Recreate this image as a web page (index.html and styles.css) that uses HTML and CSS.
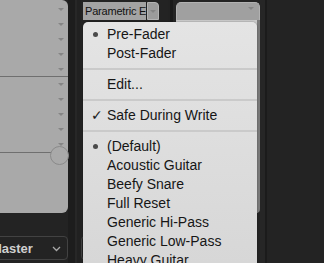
FILE: index.html
```html
<!DOCTYPE html>
<html lang="en">

<head>
    <meta charset="UTF-8">
    <title>Mixer insert menu</title>
    <link rel="stylesheet" href="styles.css">
</head>

<body>
    <div class="mixer">
        <div class="strip strip-master">
            <div class="panel">
                <ul class="slots">
                    <li><i class="arrow"></i></li>
                    <li><i class="arrow"></i></li>
                    <li><i class="arrow"></i></li>
                    <li><i class="arrow"></i></li>
                    <li><i class="arrow"></i></li>
                </ul>
                <ul class="slots">
                    <li><i class="arrow"></i></li>
                    <li><i class="arrow"></i></li>
                    <li><i class="arrow"></i></li>
                    <li><i class="arrow"></i></li>
                    <li><i class="arrow"></i></li>
                </ul>
                <span class="knob"></span>
            </div>
            <div class="output output-master">
                <span>Master</span>
                <svg width="9" height="6" viewBox="0 0 9 6">
                    <polyline points="1,1 4.5,4.5 8,1" fill="none" stroke="#a8a8a8" stroke-width="1.3" />
                </svg>
            </div>
        </div>
        <div class="gutter gutter-a"></div>
        <div class="strip strip-eq">
            <div class="insert">
                <span class="insert-name">Parametric E</span>
                <span class="insert-btn"><i class="arrow"></i></span>
            </div>
            <div class="output"></div>
        </div>
        <div class="gutter gutter-b"></div>
        <div class="strip strip-send">
            <div class="insert insert-empty"><i class="arrow"></i></div>
            <div class="panel panel-light"></div>
        </div>
        <div class="gutter gutter-c"></div>
    </div>

    <!-- popup menu of the insert slot -->
    <ul class="menu">
        <li class="marked">Pre-Fader</li>
        <li>Post-Fader</li>
        <li class="sep"></li>
        <li>Edit...</li>
        <li class="sep"></li>
        <li class="checked">Safe During Write</li>
        <li class="sep"></li>
        <li class="marked">(Default)</li>
        <li>Acoustic Guitar</li>
        <li>Beefy Snare</li>
        <li>Full Reset</li>
        <li>Generic Hi-Pass</li>
        <li>Generic Low-Pass</li>
        <li>Heavy Guitar</li>
    </ul>
</body>

</html>
```

FILE: styles.css
```css
body {
    margin: 0;
    padding: 0;
    background: #232323;
    font-family: 'Liberation Sans', Arial, sans-serif;
    overflow: hidden;
}

ul {
    margin: 0;
    padding: 0;
    list-style: none;
}

.mixer {
    display: flex;
    height: 263px;
}

.strip {
    display: flex;
    flex-direction: column;
    flex-shrink: 0;
}

.strip-master {
    width: 68px;
}

.strip-eq {
    width: 87px;
}

.strip-send {
    width: 84px;
}

.gutter {
    flex-shrink: 0;
}

.gutter-a {
    width: 13px;
    background: linear-gradient(to right, #1d1d1d 0 7px, #272727 7px 9px, #212121 9px);
}

.gutter-b {
    width: 8px;
    background: linear-gradient(to right, #222 0 2px, #1a1a1a 2px 5px, #242424 5px);
}

.gutter-c {
    flex: 1;
    background: linear-gradient(to right, #262626 0 5px, #1b1b1b 5px 7px, #232323 7px);
}

.arrow {
    display: block;
    width: 0;
    height: 0;
    border-left: 3px solid transparent;
    border-right: 3px solid transparent;
    border-top: 3px solid #858585;
}

/* left strip */
.panel {
    position: relative;
    height: 213px;
    background: #a9a9a9;
    border-radius: 0 6px 6px 0;
    box-sizing: border-box;
    padding-top: 2px;
}

.slots {
    border-bottom: 1px solid #6f6f6f;
}

.slots li {
    display: flex;
    justify-content: flex-end;
    align-items: center;
    height: 15px;
    padding-right: 4px;
}

.slots:first-child li:last-child {
    height: 14px;
}

.knob {
    position: absolute;
    left: 50px;
    top: 146px;
    width: 17px;
    height: 17px;
    border: 1px solid #8a8a8a;
    border-radius: 50%;
    background: #a9a9a9;
}

.output {
    margin-top: 25px;
    height: 22px;
    border: 1px solid #424242;
    border-radius: 4px;
}

.output-master {
    display: flex;
    align-items: center;
    justify-content: space-between;
    margin-top: 23px;
    margin-left: -14px;
    padding: 0 6px 0 4px;
    color: #cfcfcf;
    font-size: 13px;
    font-weight: bold;
}

.output-master svg {
    margin-top: 1px;
}

/* middle strip */
.insert {
    display: flex;
    height: 18px;
    margin: 2px 0 0 2px;
}

.insert-name {
    width: 63px;
    background: #a3a3a3;
    color: #111;
    font-size: 11px;
    letter-spacing: -0.2px;
    line-height: 18px;
    padding-left: 2px;
    box-sizing: border-box;
    white-space: nowrap;
}

.insert-btn {
    display: flex;
    align-items: center;
    justify-content: center;
    width: 12px;
    margin-left: 1px;
    background: #9c9c9c;
    border: 1px solid #b4b4b4;
    border-radius: 0 4px 0 0;
    box-sizing: border-box;
}

.strip-eq .output {
    margin-top: 216px;
    margin-left: 0;
}

/* right strip */
.insert-empty {
    justify-content: flex-end;
    align-items: center;
    margin: 2px 0 0 0;
    padding-right: 5px;
    background: #a0a0a0;
    border: 1px solid #b2b2b2;
    border-bottom: none;
    border-radius: 5px 5px 0 0;
    box-sizing: border-box;
}

.insert-empty .arrow {
    margin-top: -6px;
}

.panel-light {
    height: 193px;
    padding: 0;
    background: #cbcbcb;
    border-right: 3px solid #7a7a7a;
    border-radius: 0 0 4px 4px;
}

/* popup menu */
.menu {
    position: absolute;
    left: 83px;
    top: 22px;
    width: 174px;
    height: 241px;
    padding-top: 3px;
    box-sizing: border-box;
    overflow: hidden;
    background: linear-gradient(#e4e4e4, #d7d7d7);
    border-radius: 5px 5px 0 0;
    box-shadow: 0 0 2px rgba(0, 0, 0, 0.4);
}

.menu li {
    position: relative;
    height: 19px;
    line-height: 19px;
    padding-left: 24px;
    font-size: 14px;
    color: #161616;
    white-space: nowrap;
}

.menu .sep {
    height: 2px;
    margin: 5px 0;
    padding: 0;
    background: #cacaca;
}

.menu .marked::before {
    content: '';
    position: absolute;
    left: 10px;
    top: 7px;
    width: 5px;
    height: 5px;
    border-radius: 50%;
    background: #4a4a4a;
}

.menu .checked::before {
    content: '\2713';
    position: absolute;
    left: 8px;
    top: 0;
    font-family: 'DejaVu Sans', sans-serif;
    font-size: 14px;
    font-weight: bold;
    color: #1b1b1b;
}
```
